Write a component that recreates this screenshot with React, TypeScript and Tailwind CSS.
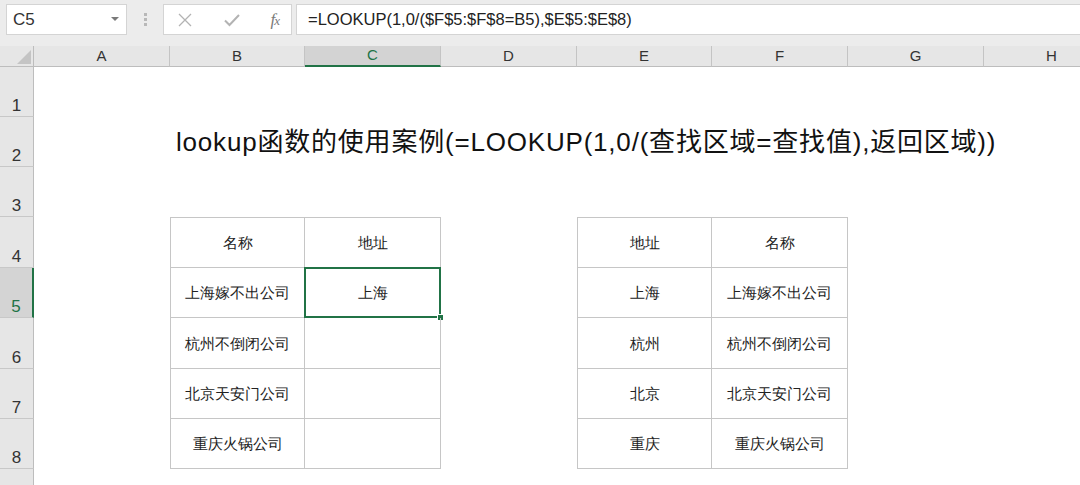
import React from 'react';

const COLS = ['A', 'B', 'C', 'D', 'E', 'F', 'G', 'H'];
const ROWS = [1, 2, 3, 4, 5, 6, 7, 8];

// table contents keyed by "col-row"
const CELLS: Record<string, string> = {
  'B-4': '名称', 'C-4': '地址',
  'B-5': '上海嫁不出公司', 'C-5': '上海',
  'B-6': '杭州不倒闭公司',
  'B-7': '北京天安门公司',
  'B-8': '重庆火锅公司',
  'E-4': '地址', 'F-4': '名称',
  'E-5': '上海', 'F-5': '上海嫁不出公司',
  'E-6': '杭州', 'F-6': '杭州不倒闭公司',
  'E-7': '北京', 'F-7': '北京天安门公司',
  'E-8': '重庆', 'F-8': '重庆火锅公司',
};

const inTable = (col: string, row: number) =>
  row >= 4 && row <= 8 && (col === 'B' || col === 'C' || col === 'E' || col === 'F');

const Toolbar = () => (
  <div className="h-[46px] bg-[#ececec] flex items-start pt-[4px] pl-[6px] gap-0">
    {/* name box */}
    <div className="w-[121px] h-[31px] bg-white border border-[#d4d4d4] flex items-center pl-[6px] pr-[7px]">
      <span className="text-[17px] text-[#333] font-['Liberation_Sans',sans-serif] flex-1">C5</span>
      <svg width="8" height="5" viewBox="0 0 8 5"><path d="M0 0h8L4 4z" fill="#7a7a7a" /></svg>
    </div>
    <div className="w-[36px] h-[31px] flex flex-col items-center justify-center gap-[2px]">
      <span className="w-[3px] h-[3px] bg-[#b8b8b8]" />
      <span className="w-[3px] h-[3px] bg-[#b8b8b8]" />
      <span className="w-[3px] h-[3px] bg-[#b8b8b8]" />
    </div>
    {/* cancel / enter / fx */}
    <div className="w-[129px] h-[31px] bg-white border border-[#d4d4d4] flex items-center pl-[13px] pr-[12px] justify-between">
      <svg width="16" height="16" viewBox="0 0 16 16"><path d="M2 2l12 12M14 2L2 14" stroke="#b3b3b3" strokeWidth="1.3" /></svg>
      <svg width="18" height="16" viewBox="0 0 18 16"><path d="M2 8.5l4.5 4.5L16 3" stroke="#b3b3b3" strokeWidth="2" fill="none" /></svg>
      <span className="font-['Liberation_Serif',serif] italic text-[#7a7a7a] text-[17px] leading-none tracking-[-1px]">f<span className="text-[13px]">x</span></span>
    </div>
    {/* formula */}
    <div className="ml-[4px] flex-1 h-[31px] bg-white border border-[#d4d4d4] border-r-0 flex items-center pl-[11px]">
      <span className="text-[16.5px] text-[#222] font-['Liberation_Sans',sans-serif] whitespace-nowrap">=LOOKUP(1,0/($F$5:$F$8=B5),$E$5:$E$8)</span>
    </div>
  </div>
);

export default function App() {
  return (
    <div className="w-[1080px] h-[485px] overflow-hidden bg-white relative">
      <Toolbar />
      <div className="grid grid-cols-[34px_136px_135px_136px_136px_135px_136px_136px_136px] grid-rows-[21px_50px_50px_50px_51px_50px_51px_50px_50px_16px] w-[1120px]">
        {/* corner */}
        <div className="bg-[#e6e6e6] border-r border-b border-[#bdbdbd] flex items-end justify-end pr-[2px] pb-[2px]">
          <svg width="14" height="14" viewBox="0 0 14 14"><path d="M14 0v14H0z" fill="#c4c4c4" /></svg>
        </div>
        {COLS.map((c) =>
          c === 'C' ? (
            <div key={c} className="bg-[#d3d3d3] border-r border-[#c4c4c4] border-b-2 border-b-[#217346] flex items-center justify-center text-[15px] text-[#217346] font-['Liberation_Sans',sans-serif]">
              {c}
            </div>
          ) : (
            <div key={c} className="bg-[#e6e6e6] border-r border-b border-[#c4c4c4] border-b-[#bdbdbd] flex items-center justify-center text-[15px] text-[#333] font-['Liberation_Sans',sans-serif]">
              {c}
            </div>
          )
        )}

        {ROWS.map((r) => (
          <React.Fragment key={r}>
            {r === 5 ? (
              <div className="bg-[#d4d4d4] border-b border-[#c8c8c8] border-r-2 border-r-[#217346] flex items-end justify-center pb-[2px] text-[17px] leading-none text-[#217346] font-['Liberation_Sans',sans-serif]">
                {r}
              </div>
            ) : (
              <div className="bg-[#e6e6e6] border-b border-[#c8c8c8] border-r border-r-[#bdbdbd] flex items-end justify-center pb-[2px] text-[17px] leading-none text-[#333] font-['Liberation_Sans',sans-serif]">
                {r}
              </div>
            )}
            {r === 2 ? (
              <div className="col-span-8 flex items-center pl-[142px] whitespace-nowrap text-[26px] tracking-[0.8px] text-[#111] font-['Liberation_Sans','Noto_Sans_CJK_SC',sans-serif]">
                lookup函数的使用案例(=LOOKUP(1,0/(查找区域=查找值),返回区域))
              </div>
            ) : (
              COLS.map((c) => {
                const key = `${c}-${r}`;
                if (!inTable(c, r)) return <div key={key} />;
                const first = c === 'B' || c === 'E';
                return (
                  <div
                    key={key}
                    className={
                      'relative flex items-center justify-center text-[15px] text-[#222] font-[\'Noto_Sans_CJK_SC\',sans-serif] border-r border-b border-[#c6c6c6] ' +
                      (first ? 'border-l ' : '') +
                      (r === 4 ? 'border-t' : '')
                    }
                  >
                    {CELLS[key] || ''}
                    {key === 'C-5' && (
                      <>
                        <div className="absolute -left-px -top-px -right-px -bottom-px border-2 border-[#217346]" />
                        <div className="absolute -right-[4px] -bottom-[4px] w-[7px] h-[7px] bg-[#217346] border border-white" />
                      </>
                    )}
                  </div>
                );
              })
            )}
          </React.Fragment>
        ))}
        <div className="bg-[#e6e6e6] border-r border-[#bdbdbd]" />
      </div>
    </div>
  );
}
